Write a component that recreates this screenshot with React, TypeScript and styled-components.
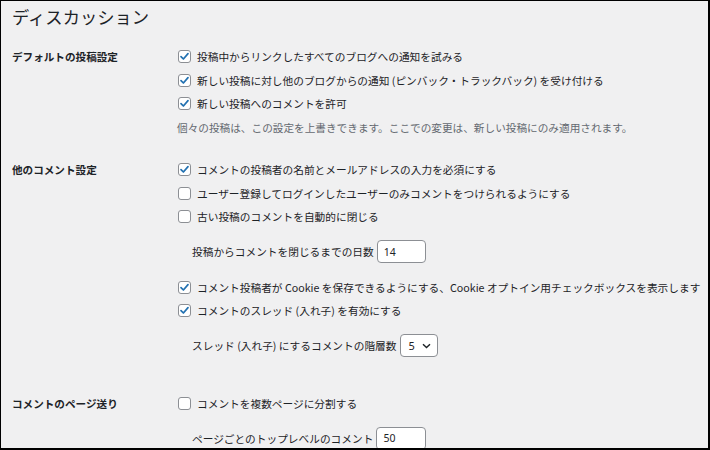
import React from "react";
import styled, { createGlobalStyle } from "styled-components";

const GlobalStyle = createGlobalStyle`
  html, body {
    margin: 0;
    padding: 0;
    background: #f0f0f1;
  }
  body {
    font-family: "Noto Sans CJK JP", "Noto Sans", sans-serif;
    color: #1d2327;
  }
`;

const Frame = styled.div`
  box-sizing: border-box;
  width: 710px;
  height: 450px;
  overflow: hidden;
  background: #f0f0f1;
  border-style: solid;
  border-color: #000;
  border-width: 1px 2px 2px 1px;
  padding: 0 0 0 11px;
`;

const Title = styled.h1`
  margin: 4px 0 0;
  font-size: 17.3px;
  line-height: 24px;
  font-weight: 400;
  color: #1d2327;
`;

const Section = styled.div<{ $top: number }>`
  display: grid;
  grid-template-columns: 165px 1fr;
  margin-top: ${(p) => p.$top}px;
`;

const Label = styled.div`
  font-size: 10.6px;
  font-weight: 700;
  line-height: 24px;
  height: 24px;
  white-space: nowrap;
`;

const Fields = styled.div`
  display: flex;
  flex-direction: column;
`;

const Row = styled.label`
  display: flex;
  align-items: center;
  height: 23.6px;
  font-size: 10.7px;
  white-space: nowrap;
  gap: 6px;
`;

const Box = styled.span`
  box-sizing: border-box;
  width: 13px;
  height: 13px;
  margin-left: 1px;
  border: 1px solid #8c8f94;
  border-radius: 3px;
  background: #fff;
  display: inline-flex;
  align-items: center;
  justify-content: center;
  flex: none;
`;

const Desc = styled.p`
  margin: 0;
  height: 24px;
  line-height: 24px;
  font-size: 10.65px;
  color: #646970;
  white-space: nowrap;
`;

const SubRow = styled.div<{ $top: number; $bottom?: number }>`
  display: flex;
  align-items: center;
  gap: 3px;
  height: 24px;
  margin: ${(p) => p.$top}px 0 ${(p) => p.$bottom ?? 0}px 15px;
  font-size: 10.7px;
  white-space: nowrap;
`;

const NumberBox = styled.div<{ $w: number }>`
  box-sizing: border-box;
  width: ${(p) => p.$w}px;
  height: 23px;
  border: 1px solid #8c8f94;
  border-radius: 4px;
  background: #fff;
  display: flex;
  align-items: center;
  padding-left: 6px;
  font-size: 10.5px;
  font-family: "Noto Sans", sans-serif;
`;

const SelectBox = styled.div`
  box-sizing: border-box;
  width: 38px;
  height: 23px;
  border: 1px solid #8c8f94;
  border-radius: 4px;
  background: #fff;
  display: flex;
  align-items: center;
  justify-content: space-between;
  padding: 0 6px 0 8px;
  font-size: 11px;
  font-family: "Noto Sans", sans-serif;
`;

const Check = ({ on }: { on?: boolean }) => (
  <Box>
    {on && (
      <svg width="11" height="11" viewBox="0 0 11 11">
        <path d="M2 5.6 L4.4 8 L9 2.6" fill="none" stroke="#2271b1" strokeWidth="1.7" strokeLinecap="round" strokeLinejoin="round" />
      </svg>
    )}
  </Box>
);

const Option = ({ on, children }: { on?: boolean; children: React.ReactNode }) => (
  <Row>
    <Check on={on} />
    <span>{children}</span>
  </Row>
);

export default function App() {
  return (
    <Frame>
      <GlobalStyle />
      <Title>ディスカッション</Title>

      <Section $top={16}>
        <Label>デフォルトの投稿設定</Label>
        <Fields>
          <Option on>投稿中からリンクしたすべてのブログへの通知を試みる</Option>
          <Option on>新しい投稿に対し他のブログからの通知 (ピンバック・トラックバック) を受け付ける</Option>
          <Option on>新しい投稿へのコメントを許可</Option>
          <Desc>個々の投稿は、この設定を上書きできます。ここでの変更は、新しい投稿にのみ適用されます。</Desc>
        </Fields>
      </Section>

      <Section $top={18}>
        <Label>他のコメント設定</Label>
        <Fields>
          <Option on>コメントの投稿者の名前とメールアドレスの入力を必須にする</Option>
          <Option>ユーザー登録してログインしたユーザーのみコメントをつけられるようにする</Option>
          <Option>古い投稿のコメントを自動的に閉じる</Option>
          <SubRow $top={11} $bottom={12}>
            投稿からコメントを閉じるまでの日数
            <NumberBox $w={49}>14</NumberBox>
          </SubRow>
          <Option on>コメント投稿者が Cookie を保存できるようにする、Cookie オプトイン用チェックボックスを表示します</Option>
          <Option on>コメントのスレッド (入れ子) を有効にする</Option>
          <SubRow $top={11}>
            スレッド (入れ子) にするコメントの階層数
            <SelectBox>
              <span>5</span>
              <svg width="9" height="6" viewBox="0 0 9 6">
                <path d="M1 1.2 L4.5 4.6 L8 1.2" fill="none" stroke="#1d2327" strokeWidth="1.4" />
              </svg>
            </SelectBox>
          </SubRow>
        </Fields>
      </Section>

      <Section $top={34}>
        <Label>コメントのページ送り</Label>
        <Fields>
          <Option>コメントを複数ページに分割する</Option>
          <SubRow $top={11}>
            ページごとのトップレベルのコメント
            <NumberBox $w={50}>50</NumberBox>
          </SubRow>
        </Fields>
      </Section>
    </Frame>
  );
}
